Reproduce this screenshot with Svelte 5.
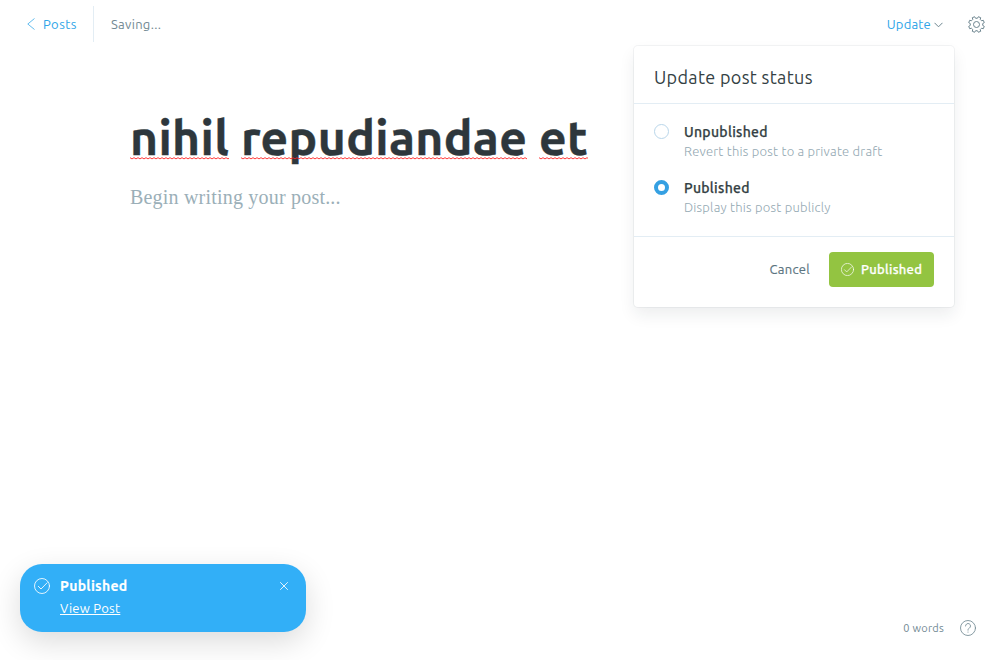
<script>
  const words = ['nihil', 'repudiandae', 'et'];
  const options = [
    { name: 'Unpublished', note: 'Revert this post to a private draft', checked: false },
    { name: 'Published', note: 'Display this post publicly', checked: true }
  ];

  // Eight-toothed cog outline, teeth straddling the vertical axis
  const point = (deg, r) => {
    const a = (deg * Math.PI) / 180;
    return `${(8.5 + r * Math.cos(a)).toFixed(2)},${(8.5 + r * Math.sin(a)).toFixed(2)}`;
  };
  const cog = Array.from({ length: 8 }, (_, k) => {
    const c = 22.5 + k * 45;
    return [point(c - 14, 6.3), point(c - 9, 8), point(c + 9, 8), point(c + 14, 6.3)].join(' ');
  }).join(' ');
</script>

{#snippet check(size)}
  <svg width={size} height={size} viewBox="0 0 16 16" fill="none" stroke="currentColor" stroke-width=".85" stroke-linecap="round" stroke-linejoin="round">
    <circle cx="8" cy="8" r="7.5" />
    <path d="M4.3 8.3 7 11l6.1-6.2" />
  </svg>
{/snippet}

<div class="editor">
  <header>
    <a class="back" href="#posts">
      <svg width="8" height="12" viewBox="0 0 8 12" fill="none" stroke="currentColor" stroke-width=".75"><path d="M7.5.5.8 6l6.7 5.5" /></svg>
      <span>Posts</span>
    </a>
    <span class="saving">Saving...</span>
    <button class="update">Update
      <svg width="9" height="6" viewBox="0 0 9 6" fill="none" stroke="currentColor"><path d="M.5.8l4 4 4-4" /></svg>
    </button>
    <button class="gear" aria-label="Settings">
      <svg width="17" height="17" viewBox="0 0 17 17" fill="none" stroke="currentColor" stroke-linejoin="round">
        <circle cx="8.5" cy="8.5" r="3" />
        <polygon points={cog} />
      </svg>
    </button>
  </header>

  <main>
    <h1>{#each words as word, i}{#if i}{' '}{/if}<span>{word}</span>{/each}</h1>
    <p>Begin writing your post...</p>
  </main>

  <section class="menu">
    <h2>Update post status</h2>
    <div class="options">
      {#each options as o}
        <div class="option">
          <i class:on={o.checked}></i>
          <div><b>{o.name}</b><small>{o.note}</small></div>
        </div>
      {/each}
    </div>
    <footer>
      <button class="cancel">Cancel</button>
      <button class="publish">{@render check(13)}<span>Published</span></button>
    </footer>
  </section>

  <aside class="toast">
    {@render check(16)}
    <div><strong>Published</strong><a href="#view">View Post</a></div>
    <svg class="close" width="8" height="8" viewBox="0 0 8 8" fill="none" stroke="currentColor" stroke-width=".85"><path d="m.2.2 7.6 7.6m0-7.6L.2 7.8" /></svg>
  </aside>

  <div class="status">
    <span>0 words</span>
    <svg width="16" height="16" viewBox="0 0 16 16" fill="none" stroke="currentColor" stroke-width=".85" stroke-linecap="round">
      <circle cx="8" cy="8" r="7.5" /><path d="M5.5 6a2.5 2.5 0 1 1 3.8 2.1C8.3 8.7 8 9.1 8 10.2" /><path d="M8 12v.2" />
    </svg>
  </div>
</div>

<style>
  :global(body) { margin: 0; background: #fff; overflow: hidden; }
  * { box-sizing: border-box; }
  .editor { position: relative; height: 660px; font-family: Ubuntu, "Noto Sans", sans-serif; font-size: 13px; color: #738a94; letter-spacing: .2px; text-rendering: optimizeLegibility; }
  button { border: 0; padding: 0; background: none; font: inherit; letter-spacing: inherit; color: inherit; display: flex; align-items: center; }
  a { color: inherit; text-decoration: none; }
  svg { flex: none; display: block; }
  header { height: 48px; padding: 6px 15px 6px 27px; display: flex; align-items: center; }
  .back { height: 36px; padding-right: 16px; border-right: 1px solid #e3edf4; display: flex; align-items: center; gap: 8px; color: #2fa5e8; letter-spacing: .46px; }
  .saving { margin-left: 17px; flex: 1; letter-spacing: .3px; }
  .update { color: #2fa5e8; gap: 3px; margin-right: 25px; }
  .update svg, .gear { color: #6d858f; }
  .update svg { margin-top: 2px; }
  main { padding: 59px 130px 0; }
  h1 { margin: 0; font-size: 48px; line-height: 60px; font-weight: 700; color: #2e373c; white-space: nowrap; letter-spacing: .35px; -webkit-text-stroke: .4px currentColor; }
  h1 span { display: inline-block; position: relative; }
  h1 span::after { content: ""; position: absolute; left: 0; right: 0; bottom: 7px; height: 3px; background: url("data:image/svg+xml,%3Csvg xmlns='http://www.w3.org/2000/svg' width='4' height='3'%3E%3Cpath d='M-1 1.5 0 .7l2 1.2 2-1.2 1 .8' fill='none' stroke='%23f22' stroke-width='.9'/%3E%3C/svg%3E") repeat-x; }
  p { margin: 15px 0 0; font: 20px/30px "Liberation Serif", serif; color: #9bafb8; }
  .menu { position: absolute; left: 634px; top: 46px; width: 320px; height: 261px; border-radius: 4px; background: #fff; box-shadow: 0 0 0 1px rgba(99, 114, 130, .08), 0 8px 16px rgba(27, 39, 51, .08); }
  h2 { margin: 0; height: 58px; padding: 0 20px; border-bottom: 1px solid #e3edf4; font-size: 18px; line-height: 62px; font-weight: 400; color: #343f44; white-space: nowrap; letter-spacing: .32px; }
  .options { height: 133px; padding: 17px 20px; border-bottom: 1px solid #e3edf4; display: grid; grid-template-rows: 56px 56px; }
  .option { display: flex; gap: 15px; white-space: nowrap; }
  i { width: 15px; height: 15px; margin-top: 3px; border: 1px solid #b9d6ea; border-radius: 50%; }
  i.on { border: 4px solid #35a0e2; }
  b { display: block; font-size: 14px; line-height: 22px; height: 20px; font-weight: 500; color: #343f44; letter-spacing: .31px; -webkit-text-stroke: .25px currentColor; }
  small { display: block; font-size: 13px; line-height: 20px; font-weight: 300; color: #93a8b2; letter-spacing: .22px; }
  footer { display: flex; justify-content: flex-end; padding: 15px 20px; gap: 19px; }
  .cancel { padding-bottom: 2px; color: #5b7480; font-weight: 400; letter-spacing: .3px; -webkit-text-stroke: .15px currentColor; }
  .publish { width: 105px; height: 35px; padding-left: 12px; gap: 7px; border-radius: 4px; background: #93c441; color: #fff; font-weight: 500; letter-spacing: .3px; -webkit-text-stroke: .25px currentColor; }
  .publish span { padding-bottom: 2px; }
  .toast { position: absolute; left: 20px; top: 564px; width: 286px; height: 68px; padding: 14px 18px 0 14px; border-radius: 22px; background: #32aff7; color: #fff; display: flex; gap: 10px; box-shadow: 0 10px 30px rgba(0, 0, 0, .14); }
  .toast div { flex: 1; }
  .toast strong { display: block; font-size: 14px; line-height: 17px; letter-spacing: .3px; -webkit-text-stroke: .15px currentColor; }
  .toast a { display: block; line-height: 20px; margin-top: 3px; text-decoration: underline; letter-spacing: .25px; }
  .close { margin-top: 4px; }
  .status { position: absolute; right: 24px; top: 620px; height: 16px; display: flex; align-items: center; gap: 16px; font-size: 11px; letter-spacing: .24px; }
</style>
